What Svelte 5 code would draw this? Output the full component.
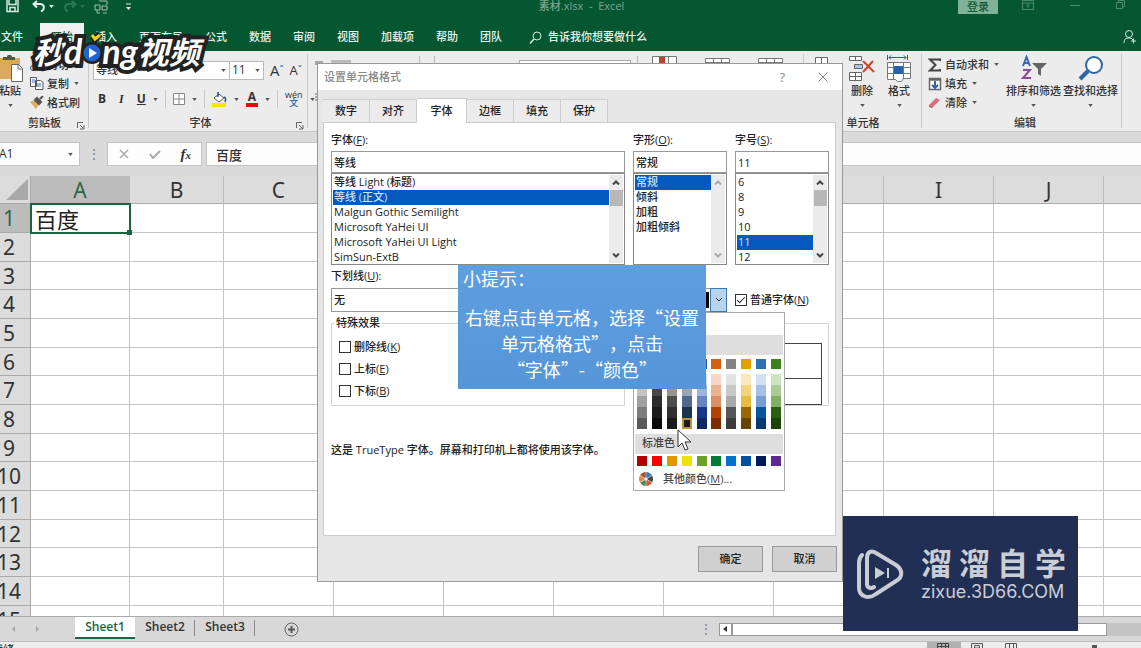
<script>
  const tabs = ['插入', '页面布局', '公式', '数据', '审阅', '视图', '加载项', '帮助', '团队'];
  const columns = ['A', 'B', 'C', 'D', 'E', 'F', 'G', 'H', 'I', 'J', ''];
  const rows = Array.from({ length: 15 }, (_, i) => i + 1);
  const sheets = ['Sheet1', 'Sheet2', 'Sheet3'];

  const dialogTabs = ['数字', '对齐', '字体', '边框', '填充', '保护'];
  const fonts = [
    '等线 Light (标题)',
    '等线 (正文)',
    'Malgun Gothic Semilight',
    'Microsoft YaHei UI',
    'Microsoft YaHei UI Light',
    'SimSun-ExtB'
  ];
  const styles = ['常规', '倾斜', '加粗', '加粗倾斜'];
  const sizes = ['6', '8', '9', '10', '11', '12'];
  const effects = [
    { name: '删除线', key: 'K' },
    { name: '上标', key: 'E' },
    { name: '下标', key: 'B' }
  ];

  const themeColors = [
    { base: '#ffffff', shades: ['#f0f0f0', '#c4c4c4', '#a0a0a0', '#7c7c7c', '#5a5a5a'] },
    { base: '#000000', shades: ['#6a6a6a', '#484848', '#2c2c2c', '#1c1c1c', '#0c0c0c'] },
    { base: '#e0dede', shades: ['#c8c6c4', '#96948f', '#504e4a', '#302f2c', '#1a1918'] },
    { base: '#44546a', shades: ['#cfd5de', '#98a6ba', '#51698e', '#1d3150', '#1c1c24'] },
    { base: '#2a56a4', shades: ['#ced8ee', '#9db2dd', '#6884c0', '#17388a', '#10285e'] },
    { base: '#d06010', shades: ['#f6d8c8', '#ecb294', '#dc9068', '#b04400', '#7c2c00'] },
    { base: '#848484', shades: ['#e2e2e2', '#c8c8c8', '#aaaaaa', '#565656', '#3c3c3c'] },
    { base: '#e0a000', shades: ['#f8e8c0', '#f2d480', '#e8bc40', '#986800', '#684600'] },
    { base: '#2f70b4', shades: ['#d2e2f4', '#a4c0e4', '#76a0d0', '#0a549c', '#063a70'] },
    { base: '#3c8020', shades: ['#d0e4c4', '#a8cc94', '#80b064', '#2c6010', '#1c4406'] }
  ];
  const standardColors = [
    '#b40000', '#fa0000', '#e09800', '#ece400', '#68a028',
    '#007c34', '#0074c8', '#0050a0', '#001a58', '#5c2890'
  ];

  let activeSheet = $state('Sheet1');
  let activeTab = $state('字体');
  let font = $state('等线 (正文)');
  let style = $state('常规');
  let size = $state('11');
  let normalFont = $state(true);
</script>

{#snippet caret()}
  <svg class="caret" width="5" height="3" viewBox="0 0 6 4"><path d="M0 0h6L3 4z" fill="#555" /></svg>
{/snippet}

{#snippet launcher()}
  <svg class="launcher" width="8" height="8" viewBox="0 0 8 8">
    <path d="M.5 6V.5H6M3 3l3.5 3.5M7 3v4H3" fill="none" stroke="#666" />
  </svg>
{/snippet}

{#snippet scrollbar(disabled)}
  <span class="scrollbar" class:disabled>
    <svg width="8" height="5" viewBox="0 0 8 5"><path d="M1 4.5l3-3 3 3" fill="none" stroke="currentColor" stroke-width="2" /></svg>
    {#if !disabled}<i></i>{/if}
    <svg class="down" width="8" height="5" viewBox="0 0 8 5"><path d="M1 .5l3 3 3-3" fill="none" stroke="currentColor" stroke-width="2" /></svg>
  </span>
{/snippet}

{#snippet stub()}
  <svg width="25" height="8" viewBox="0 0 25 8"><path d="M.5 8V2.500h24V8M8.500 2v6M16.500 2v6M1 6.500h23" fill="#fff" stroke="#777" /></svg>
{/snippet}

<div class="app">
  <header class="titlebar">
    <div class="quick">
      <svg width="13" height="13" viewBox="0 0 13 13"><path d="M1 0v11.500h11V0M3 0v4.500h7V0M4 11V7.500h5V11" fill="none" stroke="#d8e8df" stroke-width="1.500" /></svg>
      <svg width="22" height="12" viewBox="0 0 22 12"><path d="M5 1L1.500 4 5 7.500M2 4h6c5 0 5 6 1 7.500" fill="none" stroke="#e4efe9" stroke-width="2" /><path d="M17 5h5l-2.500 3z" fill="#e4efe9" /></svg>
      <svg width="22" height="12" viewBox="0 0 22 12"><path d="M9 1l3.500 3L9 7.500M12 4H6c-5 0-5 6-1 7.500" fill="none" stroke="#2d7654" stroke-width="2" /><path d="M17 5h5l-2.500 3z" fill="#2d7654" /></svg>
      <svg width="15" height="14" viewBox="0 0 15 14"><path d="M1 5h5v5H1zM5 1h8v4M8 6h5v4H8zM3 10v3h3M9 13h4" fill="none" stroke="#9fc0af" /></svg>
      <svg width="7" height="8" viewBox="0 0 7 8"><path d="M1 1h5" stroke="#e4efe9" /><path d="M1 4h5L3.500 7z" fill="#e4efe9" /></svg>
    </div>
    <span class="doc">素材.xlsx&nbsp; -&nbsp; Excel</span>
    <div class="window">
      <button class="login">登录</button>
      <svg width="12" height="10" viewBox="0 0 12 10"><path d="M.5.5h11v9H.5zM1 3h10M6 8V4.500M4.500 6L6 4.500 7.500 6" fill="none" stroke="#4f8a6e" /></svg>
      <svg width="10" height="10" viewBox="0 0 10 10"><path d="M0 5.500h10" stroke="#4f8a6e" /></svg>
      <svg width="9" height="9" viewBox="0 0 9 9"><path d="M.5 2.500h6v6h-6zM2.500 2V.5h6v6H7" fill="none" stroke="#4f8a6e" /></svg>
    </div>
  </header>

  <nav class="menu">
    <button class="file">文件</button>
    <button class="active">开始</button>
    {#each tabs as tab}
      <button>{tab}</button>
    {/each}
    <button class="tell">
      <svg width="13" height="13" viewBox="0 0 13 13"><circle cx="8" cy="5" r="4" fill="none" stroke="#d8e8df" /><path d="M5 8l-4 4.500" stroke="#d8e8df" stroke-width="1.500" /></svg>
      告诉我你想要做什么
    </button>
    <button class="share" aria-label="共享">
      <svg width="13" height="14" viewBox="0 0 13 14"><circle cx="6" cy="4" r="3.500" fill="none" stroke="#d8e8df" /><path d="M1 13c0-4 2-5 5-5 2 0 3 .5 4 2M8 11h5M10.500 8.500v5" fill="none" stroke="#d8e8df" /></svg>
    </button>
  </nav>

  <div class="ribbon">
    <section class="group clipboard">
      <div class="tools">
        <button class="big paste">
          <svg width="24" height="27" viewBox="0 0 24 27"><path d="M0 3h20v21H0z" fill="#dba95e" /><path d="M3 5V2h4c0-3 5-3 5 0h3v3z" fill="#555" /><path d="M11.500 9.500h7l4 4v13h-11z" fill="#fff" stroke="#666" /><path d="M18 10v4h4" fill="none" stroke="#666" /></svg>
          <span>粘贴</span>{@render caret()}
        </button>
        <div class="stack">
          <button><svg width="14" height="13" viewBox="0 0 14 13"><path d="M3 0l7 9M11 0L4 9" stroke="#666" /><circle cx="3" cy="10" r="2.500" fill="none" stroke="#33508c" /><circle cx="11" cy="10" r="2.500" fill="none" stroke="#33508c" /></svg>剪切</button>
          <button><svg width="14" height="13" viewBox="0 0 14 13"><path d="M.5.5h6v9h-6zM5.500 3.500h5l2.500 2V12.500H5.500z" fill="#fff" stroke="#556" /><path d="M2 3h3M2 5h3M7 7h4M7 9h4" stroke="#3f6fae" /></svg>复制{@render caret()}</button>
          <button><svg width="14" height="13" viewBox="0 0 14 13"><path d="M0 6l5-2 4 4-3 5z" fill="#e2ab63" /><path d="M5 4l2-2 4 4-2 2zM10 3l3-3" fill="#555" stroke="#555" stroke-width="2" /></svg>格式刷</button>
        </div>
      </div>
      <div class="caption">剪贴板{@render launcher()}</div>
    </section>

    <section class="group font">
      <div class="fontrow top">
        <label class="combo family"><input value="等线" aria-label="字体" />{@render caret()}</label>
        <label class="combo points"><input value="11" aria-label="字号" />{@render caret()}</label>
        <button class="grow">A<sup>ˆ</sup></button>
        <button class="shrink">A<sup>ˇ</sup></button>
      </div>
      <div class="fontrow">
        <button class="b">B</button>
        <button class="i">I</button>
        <button class="u">U</button>{@render caret()}
        <hr />
        <button aria-label="边框"><svg width="12" height="12" viewBox="0 0 12 12"><path d="M.5.5h11v11H.5zM6 0v12M0 6h12" fill="#fff" stroke="#888" /></svg></button>{@render caret()}
        <hr />
        <button aria-label="填充颜色"><svg width="15" height="15" viewBox="0 0 15 15"><path d="M2 6l5-4 5 4-5 4z" fill="#fff" stroke="#556" /><path d="M6 5V0M12 5c2 1 2 3 1 5" stroke="#2f4d77" fill="none" stroke-width="1.500" /><path d="M0 11h14v4H0z" fill="#f4e600" /></svg></button>{@render caret()}
        <button class="color">A</button>{@render caret()}
        <hr />
        <button class="phonetic"><span>wén</span><span>文</span></button>{@render caret()}
      </div>
      <div class="caption">字体{@render launcher()}</div>
    </section>

    <section class="group middle">
      <svg width="10" height="60" viewBox="0 0 10 60"><path d="M0 6h8M0 8h5M0 38h8M0 41h5M0 44h8" stroke="#666" /></svg>
      <i class="pressed"></i>
      <i class="line"></i>
      <i class="line"></i>
      <i class="format"></i>
      <i class="line"></i>
      <svg width="25" height="8" viewBox="0 0 25 8"><path d="M.5 8V.5h24V8M16.500 1v7" fill="#fff" stroke="#777" /><path d="M7 1h6v7H7z" fill="#b5482c" /></svg>
      {@render stub()}
      {@render stub()}
    </section>

    <section class="group cells">
      <div class="tools">
        <svg class="insert" width="13" height="8" viewBox="0 0 13 8"><path d="M.5.5h12v7H.5zM6.500 1v7" fill="#fff" stroke="#666" /></svg>
        <button class="big">
          <svg width="26" height="27" viewBox="0 0 26 27"><path d="M.5 1.500h12v4H.5zM6.500 1v5M5.500 9.500h8v4h-8zM.5 17.500h12v8H.5zM6.500 17v9M0 21.500h13" fill="#fff" stroke="#666" /><path d="M6 10h7v3H6z" fill="#a9c4e4" /><path d="M14 6l11 11M24 6L14 17" stroke="#d0432a" stroke-width="2" /></svg>
          <span>删除</span>{@render caret()}
        </button>
        <button class="big">
          <svg width="26" height="27" viewBox="0 0 26 27"><path d="M3 2.500h17M5 .5l-2 2 2 2M18 .5l2 2-2 2M1.500 0v5M21.500 0v5" fill="none" stroke="#2d5f9e" /><path d="M1.500 7.500h23v16h-7l-2 3h-4l-2-2h-8zM7.500 7v17M17.500 7v17M1 12.500h23M1 18.500h23" fill="#fff" stroke="#777" /><path d="M8 11h9v8H8z" fill="#2464a8" /></svg>
          <span>格式</span>{@render caret()}
        </button>
      </div>
      <div class="caption">单元格</div>
    </section>

    <section class="group editing">
      <div class="tools">
        <div class="stack">
          <button><svg width="14" height="14" viewBox="0 0 14 14"><path d="M12 3V1.500H2L7.500 7 2 12.500h10V11" fill="none" stroke="#444" stroke-width="2" /></svg>自动求和{@render caret()}</button>
          <button><svg width="14" height="14" viewBox="0 0 14 14"><path d="M1.500 1.500h11v11h-11zM1 3h12" fill="#fff" stroke="#666" stroke-width="1.500" /><path d="M7 4v7M4 8l3 3 3-3" fill="none" stroke="#2d66ad" stroke-width="2" /></svg>填充{@render caret()}</button>
          <button><svg width="14" height="14" viewBox="0 0 14 14"><path d="M1 9l7-7 4 2-7 7z" fill="#dd6b7c" /><path d="M1 9l4 2-1 1-3-1z" fill="#c45060" /></svg>清除{@render caret()}</button>
        </div>
        <button class="big">
          <svg width="26" height="27" viewBox="0 0 26 27"><path d="M2 11L5.500 2 9 11M3 8h5" fill="none" stroke="#3568b0" stroke-width="2" /><path d="M2 15h7l-7 8h8" fill="none" stroke="#8a4a9c" stroke-width="2" /><path d="M11 8h15l-6 6v7l-3-2v-5z" fill="#666" /></svg>
          <span>排序和筛选</span>{@render caret()}
        </button>
        <button class="big">
          <svg width="26" height="27" viewBox="0 0 26 27"><circle cx="16" cy="10" r="8" fill="#fff" stroke="#2d66a5" stroke-width="2" /><path d="M10 16l-8 8" stroke="#2d66a5" stroke-width="4" /></svg>
          <span>查找和选择</span>{@render caret()}
        </button>
      </div>
      <div class="caption">编辑</div>
    </section>
    <div class="rest"></div>
  </div>

  <div class="formula">
    <label class="namebox"><input value="A1" aria-label="名称框" />{@render caret()}</label>
    <span class="grip">⋮</span>
    <div class="fx">
      <svg width="12" height="10" viewBox="0 0 12 10"><path d="M2 1l8 8M10 1L2 9" stroke="#aaa" stroke-width="1.500" /></svg>
      <svg width="12" height="10" viewBox="0 0 12 10"><path d="M1 5l3 4 7-7" fill="none" stroke="#aaa" stroke-width="2" /></svg>
      <em>f<small>x</small></em>
    </div>
    <input class="content" value="百度" aria-label="编辑栏" />
  </div>

  <main class="sheet">
    <table>
      <thead>
        <tr>
          <th class="corner"><svg width="22" height="22" viewBox="0 0 22 22"><path d="M22 0v21H0z" fill="#a8a8a8" /></svg></th>
          {#each columns as column}
            <th class:current={column === 'A'} class={'col col-' + column.toLowerCase()}>{column}</th>
          {/each}
        </tr>
      </thead>
      <tbody>
        {#each rows as row}
          <tr>
            <th class:current={row === 1}>{row}</th>
            {#each columns as column}
              {#if row === 1 && column === 'A'}
                <td class="selected">百度<i></i></td>
              {:else}
                <td></td>
              {/if}
            {/each}
          </tr>
        {/each}
      </tbody>
    </table>
  </main>

  <footer class="sheets">
    <svg class="arrows" width="32" height="8" viewBox="0 0 32 8"><path d="M5 1v6L2 4zM26 1v6l3-3z" fill="#a4a4a4" /></svg>
    {#each sheets as sheet}
      <button class:active={sheet === activeSheet} onclick={() => (activeSheet = sheet)}>{sheet}</button>
    {/each}
    <svg class="add" width="15" height="15" viewBox="0 0 15 15"><circle cx="7.500" cy="7.500" r="6.500" fill="none" stroke="#666" /><path d="M4 7.500h7M7.500 4v7" stroke="#555" stroke-width="2" /></svg>
    <span class="grip">⋮</span>
    <div class="hscroll">
      <span class="left"><svg width="5" height="6" viewBox="0 0 5 6"><path d="M4 0v6L0 3z" fill="#333" /></svg></span>
      <span class="bar"></span>
    </div>
  </footer>
  <div class="status">
    <span>就绪</span>
    <div class="views">
      <i class="on"><svg width="12" height="8" viewBox="0 0 12 8"><path d="M.5 8V.5h11V8M4.500 0v8M8.500 0v8M0 3.500h12" fill="none" stroke="#444" /></svg></i>
      <i><svg width="12" height="8" viewBox="0 0 12 8"><path d="M.5 8V.5h11V8M3.500 8V2.500h5V8M3 5h6" fill="none" stroke="#555" /></svg></i>
      <i><svg width="12" height="8" viewBox="0 0 12 8"><path d="M.5 8V.5h11V8M4.500 0v5M8.500 0v5" fill="none" stroke="#555" /></svg></i>
      <b></b>
    </div>
  </div>

  <div class="dialog" role="dialog" aria-label="设置单元格格式">
    <div class="heading">
      <span>设置单元格格式</span>
      <button aria-label="帮助">?</button>
      <button aria-label="关闭"><svg width="10" height="10" viewBox="0 0 10 10"><path d="M.5.5l9 9M9.500.5l-9 9" stroke="#888" /></svg></button>
    </div>
    <div class="tabs" role="tablist">
      {#each dialogTabs as tab}
        <button role="tab" aria-selected={tab === activeTab} onclick={() => (activeTab = tab)}>{tab}</button>
      {/each}
    </div>
    <div class="panel">
      <div class="pickers">
        <div class="picker">
          <label for="font">字体(<u>F</u>):</label>
          <input id="font" value="等线" />
          <div class="list">
            <ul role="listbox" aria-label="字体">
              {#each fonts as item}
                <li role="option" aria-selected={item === font}>{item}</li>
              {/each}
            </ul>
            {@render scrollbar(false)}
          </div>
        </div>
        <div class="picker">
          <label for="style">字形(<u>O</u>):</label>
          <input id="style" value={style} />
          <div class="list">
            <ul role="listbox" aria-label="字形">
              {#each styles as item}
                <li role="option" aria-selected={item === style}>{item}</li>
              {/each}
            </ul>
            {@render scrollbar(true)}
          </div>
        </div>
        <div class="picker">
          <label for="size">字号(<u>S</u>):</label>
          <input id="size" value={size} />
          <div class="list">
            <ul role="listbox" aria-label="字号">
              {#each sizes as item}
                <li role="option" aria-selected={item === size}>{item}</li>
              {/each}
            </ul>
            {@render scrollbar(false)}
          </div>
        </div>
      </div>

      <div class="options">
        <div>
          <label class="above" for="underline">下划线(<u>U</u>):</label>
          <select id="underline"><option>无</option></select>
          <fieldset>
            <legend>特殊效果</legend>
            {#each effects as effect}
              <label class="check"><input type="checkbox" />{effect.name}(<u>{effect.key}</u>)</label>
            {/each}
          </fieldset>
        </div>
        <div>
          <div class="above"></div>
          <div class="colorrow">
            <button class="picked" aria-label="颜色">
              <i></i>
              <span><svg width="8" height="6" viewBox="0 0 8 6"><path d="M1 1l3 3 3-3" fill="none" stroke="#333" /></svg></span>
            </button>
            <label class="check"><input type="checkbox" bind:checked={normalFont} />普通字体(<u>N</u>)</label>
            <div class="palette">
              <div class="auto"></div>
              <div class="band"></div>
              <div class="swatches theme">
                {#each themeColors as color, i}
                  <div>
                    <i class="chip" style:background={color.base}></i>
                    <span>
                      {#each color.shades as shade, j}
                        <i class:hover={i === 3 && j === 4} style:background={shade}></i>
                      {/each}
                    </span>
                  </div>
                {/each}
              </div>
              <div class="band">标准色</div>
              <div class="swatches">
                {#each standardColors as color}
                  <i class="chip" style:background={color}></i>
                {/each}
              </div>
              <button class="more">
                <svg width="14" height="14" viewBox="0 0 14 14"><path d="M7 7V0a7 7 0 0 1 6 3.500z" fill="#3b78b8" /><path d="M7 7l6-3.500a7 7 0 0 1 0 7z" fill="#44464c" /><path d="M7 7l6 3.500A7 7 0 0 1 7 14z" fill="#cf5a34" /><path d="M7 7v7a7 7 0 0 1-6-3.500z" fill="#3f8f5e" /><path d="M7 7l-6 3.500a7 7 0 0 1 0-7z" fill="#d88a52" /><path d="M7 7L1 3.500A7 7 0 0 1 7 0z" fill="#a8502e" /><path d="M7 0v14M1 3.500l12 7M13 3.500l-12 7" stroke="#fff" stroke-width=".5" /><circle cx="7" cy="7" r="1.500" fill="#fff" /></svg>
                <span>其他颜色(<u>M</u>)...</span>
              </button>
              <svg class="cursor" width="15" height="23" viewBox="0 0 15 23"><path d="M1 1v17l4-4 3 7 3-1-3-7h6z" fill="#fff" stroke="#333" /></svg>
            </div>
          </div>
          <fieldset class="preview"><legend aria-label="预览"></legend><div><i></i></div></fieldset>
        </div>
      </div>
      <p>这是 TrueType 字体。屏幕和打印机上都将使用该字体。</p>
    </div>
    <div class="actions">
      <button>确定</button>
      <button>取消</button>
    </div>

    <div class="tip">
      <p class="first">小提示：</p>
      <p>右键点击单元格，选择“设置单元格格式”，点击<br />“字体”-“颜色”</p>
    </div>
  </div>

  <div class="wordmark">
    <span>秒</span><span class="latin">d</span>
    <svg width="20" height="32" viewBox="0 0 20 32"><circle cx="10" cy="18" r="11" fill="#222" /><circle cx="10" cy="18" r="8.500" fill="#1f66cf" /><path d="M7 13l8 5-8 5z" fill="#fff" /><path d="M10 1l3 3 5-5" fill="none" stroke="#222" stroke-width="7" /><path d="M10 0l3 4 5-4" fill="none" stroke="#f2d21c" stroke-width="3" /></svg>
    <span class="latin">ng</span><span>视频</span>
  </div>

  <div class="brand">
    <svg width="47" height="50" viewBox="0 0 47 50"><g fill="none" stroke="#c9cdd4" stroke-width="4" stroke-linecap="round"><path d="M17 38c-3 2-7 1-7-3V9c0-6 4-8 9-5l20 12c7 5 7 12 0 16L19 45c-8 6-17 2-17-6V14c0-4 1-6 3-8" /></g><path d="M18 18l10 6-10 6z" fill="#c9cdd4" /><path d="M31 19v10" stroke="#c9cdd4" stroke-width="2" /></svg>
    <div>
      <strong><span>溜</span><span>溜</span><span>自</span><span>学</span></strong>
      <span>zixue.3D66.COM</span>
    </div>
  </div>
</div>

<style>
  :global(body) {
    overflow: hidden;
  }

  .app {
    position: relative;
    display: flex;
    flex-direction: column;
    height: 100vh;
    overflow: hidden;
    background: #dadada;
    color: #333;
    font: 500 11px/16px 'Open Sans', 'Noto Sans CJK SC', sans-serif;
  }

  .app * {
    box-sizing: border-box;
  }

  button,
  input,
  select {
    font: inherit;
    color: inherit;
  }

  button {
    display: flex;
    align-items: center;
    padding: 0;
    border: 0;
    background: none;
    white-space: nowrap;
  }

  p,
  ul {
    margin: 0;
    padding: 0;
    list-style: none;
  }

  svg {
    flex: none;
  }

  /* title bar and menu */
  .titlebar {
    display: flex;
    justify-content: space-between;
    flex: none;
    height: 23px;
    background: #055732;
    color: #7fa691;
  }

  .quick,
  .window {
    display: flex;
    flex: 1;
    align-items: flex-start;
  }

  .quick {
    gap: 9px;
    padding-left: 6px;
  }

  .quick svg:nth-child(2) {
    margin-left: 4px;
  }

  .quick svg:last-child {
    margin-top: 3px;
    margin-left: 7px;
  }

  .doc {
    padding-left: 32px;
    line-height: 11px;
  }

  .window {
    justify-content: flex-end;
    gap: 36px;
    padding-right: 16px;
  }

  .window .login {
    margin-right: -12px;
    padding: 0 9px;
    height: 14px;
    background: #7fb297;
    color: #17593a;
  }

  .menu {
    display: flex;
    flex: none;
    height: 28px;
    background: #055732;
    color: #e8f1ec;
  }

  .menu button {
    padding: 0 11px;
  }

  .menu .file {
    margin: 0 6px 0 -10px;
  }

  .menu .active {
    background: #f0f0f0;
    color: #1a5c3c;
  }

  .menu .tell {
    gap: 6px;
    padding-left: 16px;
  }

  .menu .share {
    margin-left: auto;
    padding: 0 5px;
  }

  /* ribbon */
  .ribbon {
    display: flex;
    flex: none;
    height: 81px;
    border-bottom: 1px solid #c6c6c6;
    background: #ececec;
  }

  .group {
    display: flex;
    flex: none;
    flex-direction: column;
    position: relative;
    padding-top: 4px;
  }

  .group::after {
    content: '';
    position: absolute;
    right: 0;
    top: 3px;
    bottom: 3px;
    border-right: 1px solid #c8c8c8;
  }

  .tools {
    display: flex;
    height: 60px;
  }

  .big {
    flex-direction: column;
    gap: 1px;
  }

  .big .caret {
    margin-top: 4px;
  }

  .stack button {
    gap: 3px;
    height: 19px;
  }

  .stack .caret {
    margin-left: 2px;
  }

  .caption {
    display: flex;
    justify-content: center;
    position: relative;
  }

  .launcher {
    position: absolute;
    right: 4px;
    top: 7px;
  }

  .clipboard {
    width: 89px;
  }

  .clipboard .tools {
    gap: 6px;
    margin-left: -4px;
  }

  .paste svg:first-child {
    margin-left: 4px;
  }

  .font {
    width: 219px;
    padding-left: 4px;
  }

  .fontrow {
    display: flex;
    align-items: center;
    gap: 7px;
    height: 32px;
    padding-left: 5px;
    font-size: 12px;
  }

  .fontrow.top {
    height: 28px;
    gap: 0;
    padding: 2px 0 0;
  }

  .combo {
    display: flex;
    align-items: center;
    height: 19px;
    padding-right: 3px;
    border: 1px solid #bbb;
    background: #fff;
  }

  .combo input,
  .namebox input {
    flex: 1;
    min-width: 0;
    padding: 0 2px;
    border: 0;
    background: none;
  }

  .family {
    width: 137px;
    font-size: 11px;
  }

  .points {
    width: 35px;
    margin-left: -1px;
  }

  .grow,
  .shrink {
    margin-left: 6px;
    font-size: 15px;
  }

  .shrink {
    font-size: 13px;
  }

  .grow sup,
  .shrink sup {
    color: #2d5f9e;
    font-size: 10px;
    line-height: 8px;
  }

  .fontrow hr {
    height: 18px;
    margin: 0;
    border: 0;
    border-left: 1px solid #c8c8c8;
  }

  .b,
  .i {
    margin-right: 3px;
  }

  .b {
    font-weight: 700;
  }

  .i {
    padding: 0 3px;
    font-family: 'Liberation Serif', serif;
    font-style: italic;
    font-weight: 700;
  }

  .u {
    font-weight: 700;
    text-decoration: underline;
  }

  .color {
    padding: 0 2px;
    border-bottom: 4px solid #e01010;
    line-height: 12px;
    font-weight: 700;
  }

  .phonetic {
    flex-direction: column;
    font-size: 9px;
    line-height: 8px;
  }

  .phonetic span + span {
    color: #2d5f9e;
  }

  .middle {
    flex: 1;
    flex-direction: row;
    align-items: flex-start;
    gap: 14px;
    min-width: 0;
    padding: 5px 21px 0 7px;
    overflow: hidden;
  }

  .middle i {
    height: 8px;
  }

  .middle .pressed {
    width: 20px;
    margin: 4px 54px 0 -8px;
    background: #bbb;
  }

  .middle .line {
    border-left: 1px solid #bbb;
  }

  .middle .format {
    flex: 1;
    margin: 4px -8px 0 70px;
    border: 1px solid #aaa;
    border-bottom: 0;
    background: #fff;
  }

  .middle svg + svg {
    margin-left: 14px;
  }

  .cells {
    width: 118px;
  }

  .cells .tools {
    gap: 11px;
    padding-left: 11px;
  }

  .cells .insert {
    margin: 2px 10px 0 0;
  }

  .editing {
    width: 200px;
    padding-left: 6px;
  }

  .editing .tools {
    gap: 2px;
  }

  .editing .stack {
    width: 76px;
  }

  .rest {
    width: 19px;
  }

  /* formula bar */
  .formula {
    display: flex;
    align-items: center;
    flex: none;
    height: 44px;
  }

  .formula > * {
    height: 24px;
    border: 1px solid #c4c4c4;
    background: #fdfdfd;
  }

  .namebox {
    display: flex;
    align-items: center;
    width: 84px;
    padding-right: 6px;
    margin-left: -4px;
    font-size: 12px;
  }

  .grip {
    width: 27px;
    border: 0;
    background: none;
    color: #888;
    font-size: 14px;
    line-height: 24px;
    text-align: center;
  }

  .fx {
    display: flex;
    align-items: center;
    justify-content: space-between;
    width: 95px;
    padding: 0 10px;
    margin-right: 4px;
  }

  .fx em {
    font: italic 700 15px 'Liberation Serif', serif;
  }

  .fx small {
    font-size: 11px;
  }

  .content {
    flex: 1;
    padding: 0 9px;
    border-right: 0;
    font-size: 13px;
  }

  /* grid */
  .sheet {
    flex: 1;
    min-height: 0;
    overflow: hidden;
    background: #fff;
  }

  table {
    width: 1226px;
    margin-left: -12px;
    border-spacing: 0;
    table-layout: fixed;
    font-size: 21px;
    line-height: 26px;
  }

  th {
    height: 28px;
    padding: 0;
    border-right: 1px solid #aaa;
    border-bottom: 1px solid #aaa;
    background: #dcdcdc;
    color: #333;
    font-family: 'Noto Sans', sans-serif;
    font-weight: 400;
  }

  .corner {
    width: 43px;
    text-align: right;
    line-height: 0;
    vertical-align: bottom;
  }

  .corner svg {
    margin: 0 2px 2px 0;
  }

  .col {
    width: 110px;
    border-right-color: #bbb;
  }

  .col-a {
    width: 99px;
  }

  .col-b {
    width: 94px;
  }

  td {
    height: 29px;
    padding: 0;
    border-right: 1px solid #c4c4c4;
    border-bottom: 1px solid #c4c4c4;
  }

  tbody tr:nth-child(3n) td,
  tbody tr:nth-child(3n) th {
    height: 28px;
  }

  tbody th {
    line-height: 24px;
  }

  th.current {
    background: #bcbcbc;
    color: #2d6448;
  }

  .selected {
    position: relative;
    padding-left: 4px;
    border: 0;
    outline: 2px solid #1c6341;
    outline-offset: -1px;
    color: #222;
    font-size: 22px;
    font-weight: 400;
  }

  .selected i {
    position: absolute;
    right: -2px;
    bottom: -2px;
    width: 5px;
    height: 5px;
    background: #1c6341;
  }

  /* sheet tabs */
  .sheets {
    display: flex;
    align-items: center;
    flex: none;
    height: 26px;
    border-top: 1px solid #aaa;
    border-bottom: 1px solid #bbb;
    background: #d8d8d8;
    font-size: 12px;
  }

  .arrows {
    margin: 0 33px 0 10px;
  }

  .sheets button {
    justify-content: center;
    position: relative;
    width: 60px;
    height: 22px;
    margin-bottom: 3px;
    border-bottom: 2px solid transparent;
    font-weight: 600;
  }

  .sheets button:not(.active)::after {
    content: '';
    position: absolute;
    right: 0;
    top: 3px;
    bottom: 1px;
    border-right: 1px solid #888;
  }

  .sheets .active {
    border-color: #1c6341;
    background: #fff;
    color: #1c6341;
  }

  .add {
    margin-left: 29px;
  }

  .sheets .grip {
    margin-left: auto;
  }

  .hscroll {
    display: flex;
    flex: 0 1 422px;
    height: 13px;
    background: #c4c4c4;
  }

  .hscroll span {
    border: 1px solid #999;
    background: #fff;
  }

  .left {
    display: flex;
    align-items: center;
    justify-content: center;
    width: 13px;
  }

  .bar {
    flex: 1;
    margin-right: 34px;
  }

  .status {
    display: flex;
    justify-content: space-between;
    flex: none;
    height: 6px;
    overflow: hidden;
    background: #ececec;
  }

  .status span {
    margin-left: -8px;
  }

  .views {
    display: flex;
    align-items: flex-start;
    padding-right: 44px;
  }

  .views i {
    width: 34px;
    height: 8px;
    padding: 1px 10px;
    line-height: 0;
  }

  .views .on {
    background: #b0b0b0;
  }

  .views b {
    width: 5px;
    height: 8px;
    margin: 3px 0 0 63px;
    background: #555;
  }

  /* format cells dialog */
  .dialog {
    position: absolute;
    left: 317px;
    top: 63px;
    width: 526px;
    border: 1px solid #999;
    background: #e6e6e6;
    color: #222;
  }

  .heading {
    display: flex;
    align-items: center;
    height: 26px;
    padding: 0 14px 0 6px;
    background: #fff;
    color: #888;
  }

  .heading span {
    margin-right: auto;
  }

  .heading button {
    margin-left: 33px;
    font-size: 13px;
  }

  .tabs {
    display: flex;
    align-items: flex-end;
    height: 32px;
    margin: 0 6px 0 5px;
  }

  .tabs button {
    position: relative;
    justify-content: center;
    width: 47px;
    height: 23px;
    border: 1px solid #ccc;
    border-width: 1px 1px 0 0;
    background: #ebebeb;
  }

  .tabs button[aria-selected='true'] {
    width: 50px;
    height: 25px;
    margin-bottom: -1px;
    background: #fff;
  }

  .panel {
    height: 414px;
    margin: 0 6px 0 5px;
    padding: 9px 6px 0 7px;
    border: 1px solid #ccc;
    background: #fff;
  }

  .pickers {
    display: grid;
    grid-template-columns: 1fr 94px 94px;
    gap: 8px;
  }

  .picker {
    display: flex;
    flex-direction: column;
  }

  .picker > label {
    margin-bottom: 3px;
  }

  .picker > input {
    width: 100%;
    height: 22px;
    padding: 0 2px;
    border: 1px solid #999;
  }

  .list {
    display: flex;
    height: 92px;
    padding: 1px;
    border: 1px solid #888;
  }

  .list ul {
    flex: 1;
  }

  .list li {
    height: 15px;
    padding-left: 1px;
    line-height: 14px;
    white-space: nowrap;
  }

  .list li[aria-selected='true'] {
    background: #0559be;
    color: #cfe2f8;
  }

  .scrollbar {
    display: flex;
    flex-direction: column;
    align-items: center;
    width: 14px;
    padding: 5px 0;
    background: #ebebeb;
    color: #444;
  }

  .scrollbar.disabled {
    color: #aaa;
  }

  .scrollbar i {
    width: 13px;
    height: 16px;
    margin-top: 5px;
    background: #b8b8b8;
  }

  .scrollbar .down {
    margin-top: auto;
  }

  .options {
    display: grid;
    grid-template-columns: 1fr 196px;
    gap: 8px;
    margin-top: 3px;
  }

  .above {
    display: block;
    height: 20px;
  }

  .options select {
    width: 100%;
    height: 24px;
    padding: 0 2px;
    border: 1px solid #999;
    appearance: none;
    background: #fff;
  }

  fieldset {
    height: 91px;
    margin: 3px 0 0;
    padding: 5px 7px;
    border: 1px solid #d4d4d4;
  }

  legend {
    height: 16px;
    margin-left: -5px;
    padding: 0 2px;
  }

  .check {
    display: flex;
    align-items: center;
    height: 22px;
    white-space: nowrap;
  }

  .check input {
    appearance: none;
    flex: none;
    width: 12px;
    height: 12px;
    margin: 0 3px 0 0;
    border: 1px solid #333;
  }

  .check input:checked::before {
    content: '';
    display: block;
    width: 7px;
    height: 3px;
    margin: 2px 1px;
    border: solid #222;
    border-width: 0 0 1px 1px;
    transform: rotate(-45deg);
  }

  .colorrow {
    display: flex;
    align-items: center;
    position: relative;
    height: 24px;
  }

  .picked {
    width: 94px;
    height: 24px;
    margin-right: 8px;
    border: 1px solid #999;
    background: #fff;
  }

  .picked i {
    flex: 1;
    height: 16px;
    margin: 0 2px;
    background: #000;
  }

  .picked span {
    display: flex;
    align-items: center;
    justify-content: center;
    width: 15px;
    height: 22px;
    outline: 1px solid #3c78b4;
    background: #b8d4ee;
  }

  .palette {
    position: absolute;
    left: 0;
    top: 24px;
    z-index: 1;
    width: 152px;
    height: 179px;
    border: 1px solid #aaa;
    background: #fff;
    color: #444;
  }

  .auto {
    height: 22px;
  }

  .band {
    height: 20px;
    margin: 0 1px;
    padding: 1px 7px;
    background: #dedede;
  }

  .swatches {
    display: flex;
    justify-content: space-between;
    height: 14px;
    padding: 2px 3px 0;
  }

  .swatches.theme {
    height: 79px;
    padding-top: 4px;
  }

  .swatches i {
    display: block;
    height: 11px;
  }

  .swatches .chip {
    width: 10px;
    height: 10px;
  }

  .theme span {
    display: block;
    margin-top: 5px;
  }

  .theme .hover {
    border: 2px solid #c09040;
  }

  .more {
    gap: 10px;
    height: 22px;
    padding-left: 5px;
  }

  .cursor {
    position: absolute;
    left: 43px;
    top: 116px;
  }

  .preview {
    padding: 12px 6px 0;
  }

  .preview div {
    height: 62px;
    border: 1px solid #444;
  }

  .preview i {
    display: block;
    height: 35px;
    border-bottom: 1px solid #444;
  }

  .panel > p {
    margin-top: 36px;
  }

  .actions {
    display: flex;
    justify-content: flex-end;
    gap: 9px;
    padding: 10px 5px 9px;
  }

  .actions button {
    justify-content: center;
    width: 65px;
    height: 26px;
    border: 1px solid #999;
    background: #d0d0d0;
  }

  .tip {
    position: absolute;
    left: 140px;
    top: 201px;
    z-index: 2;
    width: 248px;
    height: 124px;
    padding: 0 5px;
    background: linear-gradient(#5f9fe0, #5595d8);
    color: #fff;
    font: 400 18px/26px 'Noto Sans CJK SC', sans-serif;
    text-align: center;
    text-spacing-trim: space-all;
  }

  .tip .first {
    margin-bottom: 13px;
    text-align: left;
  }

  /* overlays */
  .wordmark {
    position: absolute;
    left: 33px;
    top: 32px;
    display: flex;
    align-items: center;
    height: 38px;
    color: #fff;
    font: italic 700 31px/38px 'Noto Sans CJK SC', sans-serif;
    -webkit-text-stroke: 8px #222;
    paint-order: stroke;
  }

  .wordmark .latin {
    font-family: Lato, sans-serif;
    font-size: 34px;
  }

  .wordmark svg {
    position: relative;
    overflow: visible;
  }

  .brand {
    position: absolute;
    right: 63px;
    bottom: 17px;
    display: flex;
    align-items: center;
    gap: 17px;
    width: 235px;
    height: 115px;
    padding-left: 14px;
    background: #222f55;
    color: #c9cdd4;
    font: 400 18px/20px Inter, sans-serif;
  }

  .brand strong {
    display: flex;
    gap: 7px;
    margin-bottom: 3px;
    font: 700 31px/34px 'Noto Sans CJK SC', sans-serif;
  }
</style>
